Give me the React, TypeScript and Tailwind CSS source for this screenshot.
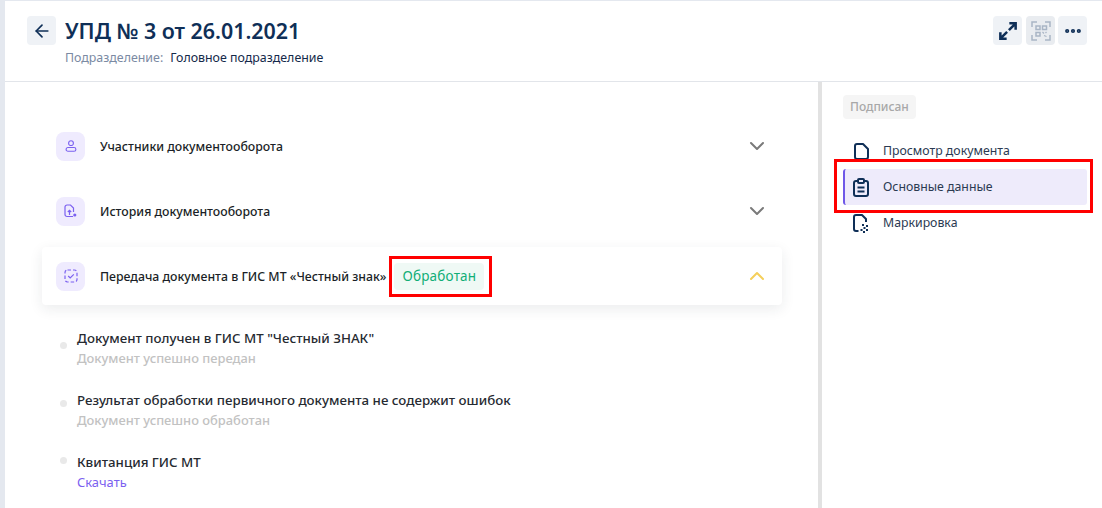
import { ArrowLeft, ChevronDown, ChevronUp, MoreHorizontal } from 'lucide-react'

function QrIcon() {
  return (
    <svg width="20" height="20" viewBox="0 0 20 20" fill="none" stroke="#a9b5c5" strokeWidth="1.5">
      <path d="M1 6V1h5M14 1h5v5M19 14v5h-5M6 19H1v-5" />
      <rect x="5" y="5" width="4" height="3.5" />
      <rect x="11.5" y="5" width="4" height="3.5" />
      <rect x="5" y="11.5" width="4" height="3.5" />
      <path d="M11.5 11l1.5 1.5M15.5 11l-1 1M13 14.5l2.5 1" strokeWidth="1.2" />
    </svg>
  )
}

function ExpandIcon() {
  return (
    <svg width="18" height="18" viewBox="0 0 20 20" fill="none" stroke="#0f2f57" strokeWidth="2.8">
      <path d="M11 9l7-7M11.5 1.5h7v7M9 11l-7 7M1.5 11.5v7h7" />
    </svg>
  )
}

function PageIcon() {
  return (
    <svg width="15" height="17" viewBox="0 0 15 17" fill="none" stroke="#0f2f57" strokeWidth="2">
      <path d="M9 1H3a2 2 0 0 0-2 2v11a2 2 0 0 0 2 2h9a2 2 0 0 0 2-2V6z" strokeLinejoin="round" />
    </svg>
  )
}

function ClipboardIcon() {
  return (
    <svg width="16" height="19" viewBox="0 0 16 19" fill="none" stroke="#0f2f57" strokeWidth="2">
      <path d="M4.5 3H3a2 2 0 0 0-2 2v11a2 2 0 0 0 2 2h10a2 2 0 0 0 2-2V5a2 2 0 0 0-2-2h-1.5" />
      <rect x="5" y="1" width="6" height="4" rx="1" />
      <path d="M4.5 9.5h7M4.5 13.5h7" />
    </svg>
  )
}

function MarkIcon() {
  return (
    <svg width="16" height="19" viewBox="0 0 16 19" fill="none" stroke="#0f2f57" strokeWidth="2">
      <path d="M5.5 17H3a2 2 0 0 1-2-2V3a2 2 0 0 1 2-2h6l4 4v3" strokeLinejoin="round" />
      <g fill="#0f2f57" stroke="none">
        <rect x="9" y="10" width="2" height="2" />
        <rect x="13" y="11" width="2" height="2" />
        <rect x="10.5" y="13" width="2" height="2" />
        <rect x="7.5" y="15" width="2" height="2" />
        <rect x="13" y="15" width="2" height="2" />
        <rect x="10" y="17" width="2" height="2" />
      </g>
    </svg>
  )
}

function UserIcon() {
  return (
    <svg width="12" height="12" viewBox="0 0 13 13" fill="none" stroke="#7b61f0" strokeWidth="1.2">
      <circle cx="6.5" cy="3.4" r="2.6" />
      <rect x="1.2" y="8.2" width="10.6" height="4" rx="2" />
    </svg>
  )
}

function HistoryIcon() {
  return (
    <svg width="13" height="14" viewBox="0 0 13 14" fill="none" stroke="#7b61f0" strokeWidth="1.2">
      <path d="M9 12.5H3a2 2 0 0 1-2-2V3a2 2 0 0 1 2-2h3.5L9.5 4v4" />
      <path d="M5.5 11V6.5M3.8 8l1.7-1.7L7.2 8" />
      <circle cx="10.8" cy="11" r="1.6" fill="#7b61f0" stroke="none" />
    </svg>
  )
}

function CheckIcon() {
  return (
    <svg width="14" height="14" viewBox="0 0 14 14" fill="none" stroke="#7b61f0" strokeWidth="1.2">
      <rect x="1" y="1" width="12" height="12" rx="2.5" strokeDasharray="3.5 2" />
      <path d="M4.2 7l2 2 3.6-3.6" />
    </svg>
  )
}

function AccordionRow({ icon, title, badge, open }: { icon: React.ReactNode; title: string; badge?: string; open?: boolean }) {
  return (
    <div className={`flex h-[58px] items-center rounded pl-[14px] pr-[13px] ${open ? 'bg-white shadow-[0_4px_14px_rgba(30,40,60,0.09)]' : ''}`}>
      <div className="flex h-[29px] w-[29px] items-center justify-center rounded-lg bg-[#efebfe]">{icon}</div>
      <span className="ml-[15px] mt-[2px] text-[12.3px] font-medium text-[#1b1f27]">{title}</span>
      {badge && (
        <span className="relative ml-[8px] flex h-[27px] items-center rounded bg-[#eff9f5] px-[8px] text-[13.5px] tracking-[0.2px] text-[#11ae77]">
          {badge}
          <span className="absolute -left-[5px] -top-[7px] h-[41px] w-[103px] border-[3px] border-[#f00]" />
        </span>
      )}
      <span className="ml-auto">
        {open ? <ChevronUp size={24} strokeWidth={2} color="#f5cf5b" /> : <ChevronDown size={24} strokeWidth={2} color="#7a7a7a" />}
      </span>
    </div>
  )
}

function StatusItem({ title, sub, dotClass, link }: { title: string; sub: string; dotClass: string; link?: boolean }) {
  return (
    <div className="flex">
      <span className={`h-[7px] w-[7px] shrink-0 rounded-full bg-[#e9e9e9] ${dotClass}`} />
      <div className="ml-[10px]">
        <div className="text-[13.3px] leading-[20px] font-medium text-[#262a31]">{title}</div>
        <div className={`text-[12.9px] leading-[20px] ${link ? 'text-[#7b61f0]' : 'font-medium text-[#c2c2c2]'}`}>{sub}</div>
      </div>
    </div>
  )
}

function NavItem({ icon, label, active }: { icon: React.ReactNode; label: string; active?: boolean }) {
  return (
    <div className={`relative flex h-[36px] items-center rounded-[3px] ${active ? 'border-l-2 border-[#6f58e8] bg-[#eeebfb] pl-[7px]' : 'pl-[9px]'}`}>
      <span className="flex w-[18px] justify-center">{icon}</span>
      <span className="ml-[13px] text-[12.3px] text-[#2b3a52]">{label}</span>
      {active && <span className="absolute -left-[11px] -top-[10px] h-[54px] w-[259px] border-[3px] border-[#f00]" />}
    </div>
  )
}

export default function App() {
  return (
    <div className="h-[508px] w-[1102px] overflow-hidden bg-[#e4e8ef] pl-[5px] pt-px font-['Noto_Sans',sans-serif]">
      <div className="flex h-full flex-col bg-white">
        <header className="flex h-[81px] shrink-0 border-b border-[#e2e5ea] pl-[22px] pr-[15px] pt-[15px]">
          <button className="flex h-[29px] w-[29px] items-center justify-center rounded bg-[#eff2f6] text-[#0f2f57]">
            <ArrowLeft size={20} strokeWidth={2} />
          </button>
          <div className="ml-[9px]">
            <h1 className="text-[21.4px] leading-[29px] font-semibold text-[#0f2f57]">УПД № 3 от 26.01.2021</h1>
            <div className="mt-[4px] flex text-[12.4px] leading-[18px]">
              <span className="text-[#7b8aa3]">Подразделение:</span>
              <span className="ml-[7px] text-[#14294a]">Головное подразделение</span>
            </div>
          </div>
          <div className="ml-auto flex">
            <button className="flex h-[29px] w-[29px] items-center justify-center rounded bg-[#eff2f6]">
              <ExpandIcon />
            </button>
            <button className="ml-[4px] flex h-[29px] w-[29px] items-center justify-center rounded bg-[#e9ecf0]">
              <QrIcon />
            </button>
            <button className="ml-[3px] flex h-[29px] w-[29px] items-center justify-center rounded bg-[#eff2f6] text-[#0f2f57]">
              <MoreHorizontal size={20} strokeWidth={3} />
            </button>
          </div>
        </header>
        <div className="flex min-h-0 flex-1">
          <main className="w-[817px] shrink-0 border-r-[4px] border-[#e2e2e2]">
            <div className="ml-[37px] w-[740px] pt-[35px]">
              <AccordionRow icon={<UserIcon />} title="Участники документооборота" />
              <div className="mt-[7px]">
                <AccordionRow icon={<HistoryIcon />} title="История документооборота" />
              </div>
              <div className="mt-[7px]">
                <AccordionRow icon={<CheckIcon />} title="Передача документа в ГИС МТ «Честный знак»" badge="Обработан" open />
              </div>
              <div className="ml-[18px] mt-[23px] flex flex-col gap-[22px]">
                <StatusItem dotClass="mt-[14px]" title={'Документ получен в ГИС МТ "Честный ЗНАК"'} sub="Документ успешно передан" />
                <StatusItem dotClass="mt-[10px]" title="Результат обработки первичного документа не содержит ошибок" sub="Документ успешно обработан" />
                <StatusItem dotClass="mt-[5px]" title="Квитанция ГИС МТ" sub="Скачать" link />
              </div>
            </div>
          </main>
          <aside className="flex-1 pl-[21px] pr-[15px] pt-[13px]">
            <span className="flex h-[24px] w-fit items-center rounded bg-[#f5f5f5] px-[7px] text-[12px] font-medium text-[#a8a8a8]">Подписан</span>
            <nav className="mt-[14px]">
              <NavItem icon={<PageIcon />} label="Просмотр документа" />
              <NavItem active icon={<ClipboardIcon />} label="Основные данные" />
              <NavItem icon={<MarkIcon />} label="Маркировка" />
            </nav>
          </aside>
        </div>
      </div>
    </div>
  )
}
